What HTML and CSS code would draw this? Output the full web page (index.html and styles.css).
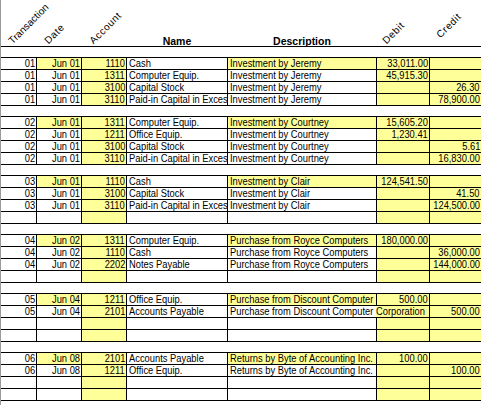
FILE: index.html
```html
<!DOCTYPE html>
<html>
<head>
<meta charset="utf-8">
<link rel="stylesheet" href="styles.css">
</head>
<body>
<div class="sheet">
  <div class="hdr">
    <div class="h rot tr"><span>Transaction</span></div>
    <div class="h rot"><span>Date</span></div>
    <div class="h rot"><span>Account</span></div>
    <div class="h ttl">Name</div>
    <div class="h ttl">Description</div>
    <div class="h rot db"><span>Debit</span></div>
    <div class="h rot up"><span>Credit</span></div>
  </div>

  <div class="blk">
    <div class="c r"><span>01</span></div><div class="c r y"><span>Jun 01</span></div><div class="c r y"><span>1110</span></div><div class="c"><span>Cash</span></div><div class="c y"><span>Investment by Jeremy</span></div><div class="c r y"><span>33,011.00</span></div><div class="c r y"></div>
    <div class="c r"><span>01</span></div><div class="c r"><span>Jun 01</span></div><div class="c r y"><span>1311</span></div><div class="c"><span>Computer Equip.</span></div><div class="c"><span>Investment by Jeremy</span></div><div class="c r y"><span>45,915.30</span></div><div class="c r y"></div>
    <div class="c r"><span>01</span></div><div class="c r"><span>Jun 01</span></div><div class="c r y"><span>3100</span></div><div class="c"><span>Capital Stock</span></div><div class="c"><span>Investment by Jeremy</span></div><div class="c r y"></div><div class="c r y"><span>26.30</span></div>
    <div class="c r"><span>01</span></div><div class="c r"><span>Jun 01</span></div><div class="c r y"><span>3110</span></div><div class="c"><span>Paid-in Capital in Excess</span></div><div class="c"><span>Investment by Jeremy</span></div><div class="c r y"></div><div class="c r y"><span>78,900.00</span></div>
  </div>

  <div class="blk">
    <div class="c r"><span>02</span></div><div class="c r y"><span>Jun 01</span></div><div class="c r y"><span>1311</span></div><div class="c"><span>Computer Equip.</span></div><div class="c y"><span>Investment by Courtney</span></div><div class="c r y"><span>15,605.20</span></div><div class="c r y"></div>
    <div class="c r"><span>02</span></div><div class="c r"><span>Jun 01</span></div><div class="c r y"><span>1211</span></div><div class="c"><span>Office Equip.</span></div><div class="c"><span>Investment by Courtney</span></div><div class="c r y"><span>1,230.41</span></div><div class="c r y"></div>
    <div class="c r"><span>02</span></div><div class="c r"><span>Jun 01</span></div><div class="c r y"><span>3100</span></div><div class="c"><span>Capital Stock</span></div><div class="c"><span>Investment by Courtney</span></div><div class="c r y"></div><div class="c r y"><span>5.61</span></div>
    <div class="c r"><span>02</span></div><div class="c r"><span>Jun 01</span></div><div class="c r y"><span>3110</span></div><div class="c"><span>Paid-in Capital in Excess</span></div><div class="c"><span>Investment by Courtney</span></div><div class="c r y"></div><div class="c r y"><span>16,830.00</span></div>
  </div>

  <div class="blk">
    <div class="c r"><span>03</span></div><div class="c r y"><span>Jun 01</span></div><div class="c r y"><span>1110</span></div><div class="c"><span>Cash</span></div><div class="c y"><span>Investment by Clair</span></div><div class="c r y"><span>124,541.50</span></div><div class="c r y"></div>
    <div class="c r"><span>03</span></div><div class="c r"><span>Jun 01</span></div><div class="c r y"><span>3100</span></div><div class="c"><span>Capital Stock</span></div><div class="c"><span>Investment by Clair</span></div><div class="c r y"></div><div class="c r y"><span>41.50</span></div>
    <div class="c r"><span>03</span></div><div class="c r"><span>Jun 01</span></div><div class="c r y"><span>3110</span></div><div class="c"><span>Paid-in Capital in Excess</span></div><div class="c"><span>Investment by Clair</span></div><div class="c r y"></div><div class="c r y"><span>124,500.00</span></div>
    <div class="c"></div><div class="c"></div><div class="c y"></div><div class="c"></div><div class="c"></div><div class="c y"></div><div class="c y"></div>
  </div>

  <div class="blk">
    <div class="c r"><span>04</span></div><div class="c r y"><span>Jun 02</span></div><div class="c r y"><span>1311</span></div><div class="c"><span>Computer Equip.</span></div><div class="c y"><span>Purchase from Royce Computers</span></div><div class="c r y"><span>180,000.00</span></div><div class="c r y"></div>
    <div class="c r"><span>04</span></div><div class="c r"><span>Jun 02</span></div><div class="c r y"><span>1110</span></div><div class="c"><span>Cash</span></div><div class="c"><span>Purchase from Royce Computers</span></div><div class="c r y"></div><div class="c r y"><span>36,000.00</span></div>
    <div class="c r"><span>04</span></div><div class="c r"><span>Jun 02</span></div><div class="c r y"><span>2202</span></div><div class="c"><span>Notes Payable</span></div><div class="c"><span>Purchase from Royce Computers</span></div><div class="c r y"></div><div class="c r y"><span>144,000.00</span></div>
    <div class="c"></div><div class="c"></div><div class="c y"></div><div class="c"></div><div class="c"></div><div class="c y"></div><div class="c y"></div>
  </div>

  <div class="blk">
    <div class="c r"><span>05</span></div><div class="c r y"><span>Jun 04</span></div><div class="c r y"><span>1211</span></div><div class="c"><span>Office Equip.</span></div><div class="c y"><span>Purchase from Discount Computer</span></div><div class="c r y"><span>500.00</span></div><div class="c r y"></div>
    <div class="c r"><span>05</span></div><div class="c r"><span>Jun 04</span></div><div class="c r y"><span>2101</span></div><div class="c"><span>Accounts Payable</span></div><div class="c spill"><span>Purchase from Discount Computer Corporation</span></div><div class="c r y"><span>500.00</span></div>
    <div class="c"></div><div class="c"></div><div class="c y"></div><div class="c"></div><div class="c"></div><div class="c y"></div><div class="c y"></div>
    <div class="c"></div><div class="c"></div><div class="c y"></div><div class="c"></div><div class="c"></div><div class="c y"></div><div class="c y"></div>
  </div>

  <div class="blk">
    <div class="c r"><span>06</span></div><div class="c r y"><span>Jun 08</span></div><div class="c r y"><span>2101</span></div><div class="c"><span>Accounts Payable</span></div><div class="c y"><span>Returns by Byte of Accounting Inc.</span></div><div class="c r y"><span>100.00</span></div><div class="c r y"></div>
    <div class="c r"><span>06</span></div><div class="c r"><span>Jun 08</span></div><div class="c r y"><span>1211</span></div><div class="c"><span>Office Equip.</span></div><div class="c"><span>Returns by Byte of Accounting Inc.</span></div><div class="c r y"></div><div class="c r y"><span>100.00</span></div>
    <div class="c"></div><div class="c"></div><div class="c y"></div><div class="c"></div><div class="c"></div><div class="c y"></div><div class="c y"></div>
    <div class="c"></div><div class="c"></div><div class="c y"></div><div class="c"></div><div class="c"></div><div class="c y"></div><div class="c y"></div>
  </div>
</div>
</body>
</html>
```

FILE: styles.css
```css
html, body {
  margin: 0;
  padding: 0;
  background: #fff;
  overflow: hidden;
}

.sheet {
  width: 481px;
  height: 405px;
  box-sizing: border-box;
  border-left: 1px solid #9a9a9a;
  overflow: hidden;
  color: #000;
}

.hdr,
.blk {
  display: grid;
  grid-template-columns: 35px 44px 44px 100px 148px 52px 51px;
  column-gap: 1px;
}

.hdr {
  height: 46px;
  border-bottom: 1px solid #000;
}

.h {
  align-self: end;
  white-space: nowrap;
}

.ttl {
  text-align: center;
  font: bold 10.5px/8px "Liberation Sans", Arial, sans-serif;
  padding-bottom: 1px;
}

.rot {
  padding-left: 13px;
  font: 10px/10px "Liberation Sans", Arial, sans-serif;
  letter-spacing: 0.6px;
}

.rot span {
  display: inline-block;
  transform-origin: 0 100%;
  transform: rotate(-45deg);
}

.rot.tr {
  letter-spacing: 0;
}

.rot.db {
  padding-left: 11px;
}

.rot.up {
  margin-bottom: 6px;
  padding-left: 12px;
}

.blk {
  grid-auto-rows: 11px;
  row-gap: 1px;
  background: #000;
  border-top: 1px solid #000;
  border-bottom: 1px solid #000;
  margin-top: 10px;
}

.c {
  display: flex;
  justify-content: flex-start;
  background: #fff;
  overflow: hidden;
  white-space: nowrap;
  font: 11px/11px "Liberation Sans", Arial, sans-serif;
  padding: 0 0 0 2px;
}

.c span {
  flex: none;
  transform: scaleX(0.85);
  transform-origin: 0 50%;
}

.c.r {
  justify-content: flex-end;
  padding: 0 1px 0 0;
}

.c.r span {
  transform-origin: 100% 50%;
}

.c.y {
  background: #ffff99;
}

.c.spill {
  grid-column: span 2;
  background: linear-gradient(to right, #fff 148px, #ffff99 148px);
}
```
